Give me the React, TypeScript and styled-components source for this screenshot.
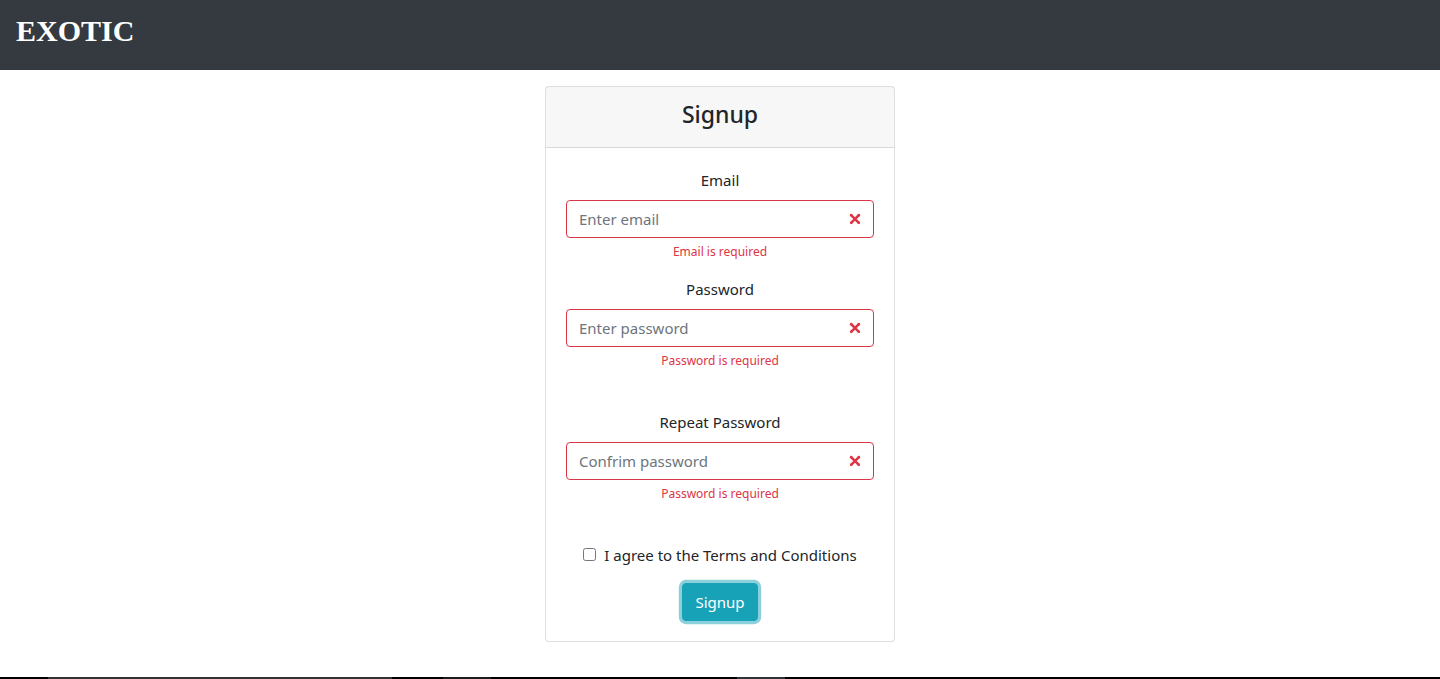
import React from "react";
import styled, { createGlobalStyle } from "styled-components";

const Global = createGlobalStyle`
  html, body { margin: 0; padding: 0; background: #fff; }
  body {
    font-family: "Noto Sans", "Open Sans", sans-serif;
    font-size: 15px;
    line-height: 1.5;
    color: #212529;
  }
  * { box-sizing: border-box; }
`;

const Page = styled.div`
  display: flex;
  flex-direction: column;
  min-height: 100vh;
`;

const Navbar = styled.nav`
  height: 70px;
  background: #343a40;
  display: flex;
  align-items: center;
  padding: 0 16px 8px;
`;

const Brand = styled.h1`
  margin: 0;
  font-family: "Liberation Serif", serif;
  font-weight: 700;
  font-size: 30px;
  color: #fff;
  line-height: 1;
`;

const Main = styled.main`
  display: flex;
  justify-content: center;
  padding: 16px 0 35px;
`;

const Card = styled.div`
  width: 350px;
  border: 1px solid rgba(0, 0, 0, 0.125);
  border-radius: 4px;
  background: #fff;
`;

const CardHeader = styled.div`
  height: 61px;
  background: rgba(0, 0, 0, 0.03);
  border-bottom: 1px solid rgba(0, 0, 0, 0.125);
  display: flex;
  align-items: center;
  justify-content: center;
`;

const Title = styled.h3`
  margin: 0;
  font-size: 23px;
  font-weight: 500;
  line-height: 1.2;
  position: relative;
  top: -2px;
`;

const CardBody = styled.form`
  padding: 20px;
  display: flex;
  flex-direction: column;
  align-items: stretch;
`;

const Group = styled.div<{ $extra?: number }>`
  display: flex;
  flex-direction: column;
  align-items: center;
  margin-bottom: ${(p) => 16 + (p.$extra ?? 0)}px;
`;

const Label = styled.label`
  display: block;
  margin-bottom: 8px;
  line-height: 24px;
`;

const InputWrap = styled.div`
  position: relative;
  width: 100%;
`;

const Input = styled.input`
  display: block;
  width: 100%;
  height: 38px;
  padding: 6px 36px 6px 12px;
  font: inherit;
  color: #495057;
  border: 1px solid #dc3545;
  border-radius: 4px;
  outline: none;
  background: #fff;
  &::placeholder { color: #6c757d; opacity: 1; }
`;

const InvalidIcon = styled.svg`
  position: absolute;
  right: 10px;
  top: 50%;
  width: 18px;
  height: 18px;
  transform: translateY(-50%);
  pointer-events: none;
`;

const Feedback = styled.div`
  margin-top: 4px;
  font-size: 12px;
  line-height: 19px;
  color: #dc3545;
`;

const CheckRow = styled.div`
  display: flex;
  align-items: center;
  justify-content: center;
  gap: 8px;
  margin-bottom: 16px;
  line-height: 24px;
`;

const Checkbox = styled.input`
  margin: 0;
  width: 13px;
  height: 13px;
  position: relative;
  top: -1px;
`;

const ButtonRow = styled.div`
  display: flex;
  justify-content: center;
`;

const Button = styled.button`
  font: inherit;
  color: #fff;
  background: #17a2b8;
  border: 1px solid #17a2b8;
  border-radius: 4px;
  padding: 6px 12px;
  line-height: 24px;
  box-shadow: 0 0 0 3.2px rgba(23, 162, 184, 0.5);
  cursor: pointer;
`;

const Footer = styled.footer`
  height: 60px;
  background: #000;
  display: flex;
  flex-shrink: 0;
`;

const FooterSeg = styled.div<{ $w: number; $c: string }>`
  width: ${(p) => p.$w}px;
  background: ${(p) => p.$c};
`;

const XIcon = () => (
  <InvalidIcon viewBox="-2 -2 7 7" fill="#dc3545">
    <path stroke="#dc3545" d="M0 0l3 3m0-3L0 3" />
    <circle r=".5" />
    <circle cx="3" r=".5" />
    <circle cy="3" r=".5" />
    <circle cx="3" cy="3" r=".5" />
  </InvalidIcon>
);

const Field = ({
  label,
  placeholder,
  type,
  error,
  extra,
}: {
  label: string;
  placeholder: string;
  type: string;
  error: string;
  extra?: number;
}) => (
  <Group $extra={extra}>
    <Label>{label}</Label>
    <InputWrap>
      <Input type={type} placeholder={placeholder} />
      <XIcon />
    </InputWrap>
    <Feedback>{error}</Feedback>
  </Group>
);

export default function App() {
  return (
    <>
      <Global />
      <Page>
        <Navbar>
          <Brand>EXOTIC</Brand>
        </Navbar>
        <Main>
          <Card>
            <CardHeader>
              <Title>Signup</Title>
            </CardHeader>
            <CardBody onSubmit={(e) => e.preventDefault()}>
              <Field label="Email" placeholder="Enter email" type="email" error="Email is required" />
              <Field
                label="Password"
                placeholder="Enter password"
                type="password"
                error="Password is required"
                extra={24}
              />
              <Field
                label="Repeat Password"
                placeholder="Confrim password"
                type="password"
                error="Password is required"
                extra={24}
              />
              <CheckRow>
                <Checkbox type="checkbox" id="terms" />
                <label htmlFor="terms">I agree to the Terms and Conditions</label>
              </CheckRow>
              <ButtonRow>
                <Button type="submit">Signup</Button>
              </ButtonRow>
            </CardBody>
          </Card>
        </Main>
        <Footer>
          <FooterSeg $w={48} $c="#000" />
          <FooterSeg $w={344} $c="#333" />
          <FooterSeg $w={51} $c="#000" />
          <FooterSeg $w={48} $c="#1c1c1c" />
          <FooterSeg $w={246} $c="#000" />
          <FooterSeg $w={48} $c="#2f3337" />
        </Footer>
      </Page>
    </>
  );
}
